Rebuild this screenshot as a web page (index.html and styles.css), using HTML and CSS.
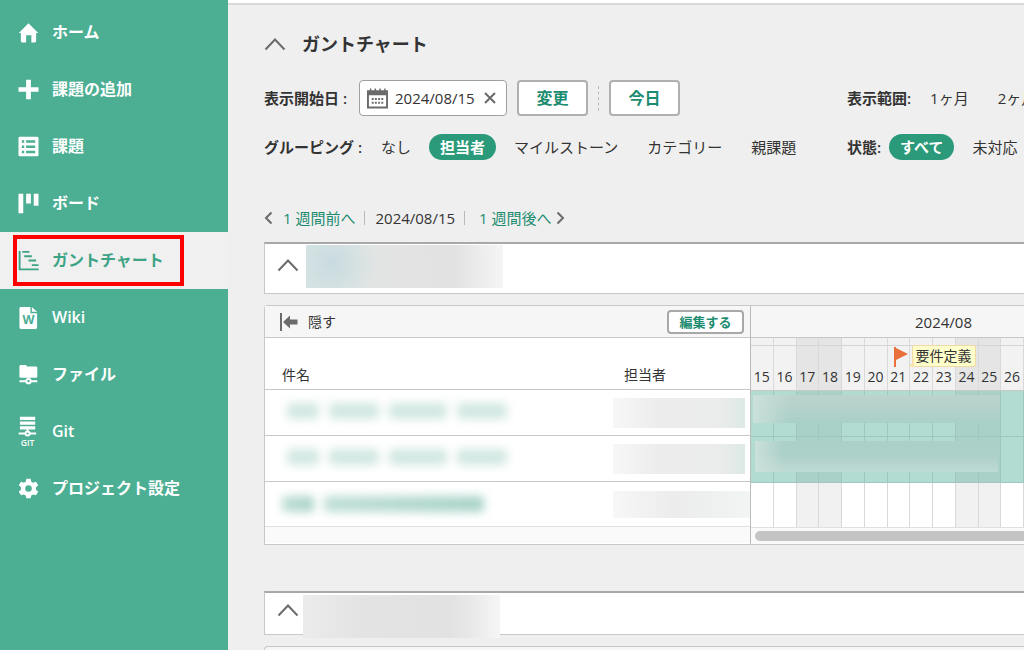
FILE: index.html
```html
<!DOCTYPE html>
<html lang="ja">
<head>
<meta charset="utf-8">
<title>ガントチャート</title>
<link rel="stylesheet" href="styles.css">
</head>
<body>
<div class="app">
  <nav class="sidebar">
    <a class="nav-item" href="#"><svg class="nav-icon" viewBox="0 0 22 22"><path d="M11 1.2 21.2 11.4H19V20q0 1.400-1.400 1.400H14V14H8.500v7.400H4.400Q3 21.400 3 20V11.400H.8Z"/></svg><span>ホーム</span></a>
    <a class="nav-item" href="#"><svg class="nav-icon" viewBox="0 0 22 22"><path d="M8.500.7h5v8h8v4.600h-8v8h-5v-8h-8V8.700h8Z"/></svg><span>課題の追加</span></a>
    <a class="nav-item" href="#"><svg class="nav-icon" viewBox="0 0 22 22"><rect x=".5" y=".7" width="21" height="20.600" rx="1.500"/><path class="cut" d="M4 4.500h2.500V7H4zm4.500 0h9.500V7H8.500zM4 10h2.500v2.500H4zm4.500 0h9.500v2.500H8.500zM4 15.500h2.500V18H4zm4.500 0h9.500V18H8.500z"/></svg><span>課題</span></a>
    <a class="nav-item" href="#"><svg class="nav-icon" viewBox="0 0 22 22"><path d="M.5.700h5v20.600h-5zM8.500.700h5v10.300h-5zM16.500.700h5v12.600h-5z"/></svg><span>ボード</span></a>
    <a class="nav-item active" href="#"><svg class="nav-icon" viewBox="0 0 22 22"><path d="M.7 1h2v18.300h19v2H.7zM4.500 1H12v2H4.500zM6.500 5.500H14.500v2H6.500zM11 10h8v2h-8zM14.500 14.800h7v2h-7z"/></svg><span>ガントチャート</span></a>
    <a class="nav-item" href="#"><svg class="nav-icon tall" viewBox="0 0 22 24"><path d="M3 .5H13V7h7v15q0 1.500-1.500 1.500H3Q1.500 23.500 1.500 22V2Q1.500.500 3 .5ZM14.500.500 20 5.500H14.500Z"/><text class="w" x="11" y="18.500">W</text></svg><span>Wiki</span></a>
    <a class="nav-item" href="#"><svg class="nav-icon" viewBox="0 0 22 22"><path d="M3 1H8q1 0 1.200 1.500H19q1.200 0 1.200 1.200v9.300q0 1.500-1.200 1.500H3q-1.500 0-1.500-1.500V2.500Q1.500 1 3 1ZM1.500 17H20.200v2H1.500z"/><circle cx="11" cy="18" r="3.300"/><path d="M10 14h2v3h-2z"/><circle class="cut" cx="11" cy="18" r="1.200"/></svg><span>ファイル</span></a>
    <a class="nav-item" href="#"><svg class="nav-icon git" viewBox="0 0 22 34"><path d="M2 1h16v3.500H2zM2 6h16v3.500H2zM2 11h16v3.500H2zM9 14h2v3h-2zM.7 17.500H19v2H.7z"/><circle cx="10" cy="18.500" r="3.200"/><circle class="cut" cx="10" cy="18.500" r="1.100"/><text x="10" y="32">GIT</text></svg><span>Git</span></a>
    <a class="nav-item" href="#"><svg class="nav-icon" viewBox="0 0 22 22"><path d="m8.800.800h4.400l.7 3 2 1.100 2.900-1 2.400 3.800-2.300 2.100v2.400l2.300 2.100-2.400 3.800-2.900-.9-2 1.100-.7 3H8.800l-.7-3-2-1.100-2.900.9L.8 14.300l2.300-2.100V9.800L.8 7.700l2.400-3.800 2.900 1 2-1.100Z"/><circle class="cut" cx="11" cy="11" r="3.400"/></svg><span>プロジェクト設定</span></a>
    <div class="highlight"></div>
  </nav>

  <main class="main">
    <div class="topbar"></div>
    <div class="content">
      <h1 class="title"><svg class="chevron" viewBox="0 0 22 14"><path d="M1.500 12.500 11 2.500l9.500 10"/></svg>ガントチャート</h1>

      <div class="filters">
        <div class="filter">
          <label class="filter-label start-label" for="start">表示開始日 :</label>
          <div class="date-box">
            <svg class="calendar" viewBox="0 0 22 21"><path d="M1 3h20v17H1z" class="frame"/><path d="M0 2h22v5H0zM3 0h1.500v3H3zM8 0h1.500v3H8zM13 0h1.500v3H13zM18 0h1.500v3H18z"/><path d="M5 10h2v2H5zm3.300 0h2v2h-2zm3.400 0h2v2h-2zm3.300 0h2v2h-2zM5 14h2v2H5zm3.300 0h2v2h-2zm3.400 0h2v2h-2zm3.300 0h2v2h-2z"/></svg>
            <input class="date-input" id="start" type="text" value="2024/08/15">
            <button class="clear" aria-label="クリア"><svg viewBox="0 0 12 12"><path d="m1 1 10 10M11 1 1 11"/></svg></button>
          </div>
          <button class="btn">変更</button>
          <span class="dots"></span>
          <button class="btn">今日</button>
        </div>
        <div class="filter">
          <span class="filter-label">表示範囲:</span>
          <div class="options"><button class="option">1ヶ月</button><button class="option">2ヶ月</button></div>
        </div>
        <div class="filter">
          <span class="filter-label">グルーピング :</span>
          <div class="options"><button class="option">なし</button><button class="option selected">担当者</button><button class="option">マイルストーン</button><button class="option">カテゴリー</button><button class="option">親課題</button></div>
        </div>
        <div class="filter">
          <span class="filter-label">状態:</span>
          <div class="options"><button class="option selected">すべて</button><button class="option">未対応</button></div>
        </div>
      </div>

      <div class="pager">
        <a class="page-link" href="#"><svg class="arrow" viewBox="0 0 9 14"><path d="M7.500 1.500 2 7l5.500 5.500"/></svg>1 週間前へ</a>
        <span class="page-date">2024/08/15</span>
        <a class="page-link following" href="#">1 週間後へ<svg class="arrow" viewBox="0 0 9 14"><path d="M1.500 1.500 7 7l-5.500 5.500"/></svg></a>
      </div>

      <section class="group">
        <svg class="chevron" viewBox="0 0 22 14"><path d="M1.500 12.500 11 2.500l9.500 10"/></svg>
        <div class="masked-name tinted"></div>
      </section>

      <section class="gantt">
        <div class="issues">
          <div class="toolbar">
            <button class="hide"><svg viewBox="0 0 18 18"><path d="M0 0h2v18H0zM3 9l7-6.500v4h7.500v5H10v4z"/></svg>隠す</button>
            <button class="btn small">編集する</button>
          </div>
          <table class="issue-table">
            <thead><tr><th class="subject">件名</th><th>担当者</th></tr></thead>
            <tbody>
              <tr><td><div class="masked-text"><i class="w30"></i><i class="w45"></i><i class="w55"></i><i class="w45"></i></div></td><td><div class="masked-person"></div></td></tr>
              <tr><td><div class="masked-text"><i class="w30"></i><i class="w45"></i><i class="w55"></i><i class="w45"></i></div></td><td><div class="masked-person"></div></td></tr>
              <tr><td><div class="masked-text strong"><i class="w30"></i><i class="w160"></i></div></td><td><div class="masked-person wide"></div></td></tr>
            </tbody>
          </table>
          <div class="foot"></div>
        </div>
        <div class="timeline">
          <div class="month">2024/08</div>
          <table class="days">
            <thead>
              <tr><th>15</th><th>16</th><th>17</th><th>18</th><th>19</th><th>20</th><th class="marked">21<div class="milestone"><svg class="flag" viewBox="0 0 14 20"><path d="M0 0h2v1l12 6L2 13v7H0z"/></svg><span class="tag"><svg class="tail" viewBox="0 0 6 8"><path d="M6 0v8H0Q4 6 5 0z"/></svg>要件定義</span></div></th><th>22</th><th>23</th><th>24</th><th>25</th><th>26</th></tr>
            </thead>
            <tbody>
              <tr class="busy"><td class="first"><div class="bar"></div></td><td></td><td></td><td></td><td></td><td></td><td></td><td></td><td></td><td></td><td></td><td></td></tr>
              <tr class="busy"><td class="first"><div class="bar lower"></div></td><td></td><td></td><td></td><td></td><td></td><td></td><td></td><td></td><td></td><td></td><td></td></tr>
              <tr><td></td><td></td><td></td><td></td><td></td><td></td><td></td><td></td><td></td><td></td><td></td><td></td></tr>
            </tbody>
          </table>
          <div class="foot"><div class="scroll-thumb"></div></div>
        </div>
      </section>

      <section class="group compact">
        <svg class="chevron" viewBox="0 0 22 14"><path d="M1.500 12.500 11 2.500l9.500 10"/></svg>
        <div class="masked-name"></div>
      </section>
      <section class="gantt next"></section>
    </div>
  </main>
</div>
</body>
</html>
```

FILE: styles.css
```css
* { box-sizing: border-box; }
body {
  margin: 0;
  background: #efefef;
  color: #333;
  font: 15px/20px "Open Sans", "Noto Sans CJK JP", sans-serif;
  overflow: hidden;
}
button, input { font: inherit; color: inherit; padding: 0; border: 0; background: none; }
button { white-space: nowrap; }
svg { display: block; flex: none; }
.app { display: flex; height: 100vh; }

.sidebar {
  position: relative;
  flex: none;
  width: 228px;
  padding-top: 4px;
  background: #4cae93;
}
.nav-item {
  display: flex;
  align-items: center;
  height: 57px;
  padding-left: 18px;
  gap: 13px;
  color: #fff;
  font-size: 16px;
  font-weight: 600;
  text-decoration: none;
}
.nav-item span { padding-bottom: 2px; }
.nav-item.active { background: #f0f0f0; color: #3da385; }
.nav-icon { width: 21px; height: 21px; fill: currentColor; }
.nav-icon.tall { height: 24px; }
.nav-icon.git { height: 34px; }
.nav-icon .cut { fill: #4cae93; }
.nav-icon text { font-size: 9px; font-weight: 600; text-anchor: middle; }
.nav-icon .w { fill: #4cae93; font-size: 13px; font-weight: 700; }
.highlight {
  position: absolute;
  left: 13px;
  top: 235px;
  width: 171px;
  height: 51px;
  border: 4px solid #f00;
}

.main { flex: 1; min-width: 0; overflow: hidden; }
.topbar { height: 5px; background: #fff; border-bottom: 2px solid #d9d9d9; }
.content { padding: 24px 0 0 36px; }
.title {
  display: flex;
  align-items: center;
  gap: 16px;
  margin: 0;
  height: 30px;
  font-size: 18px;
  font-weight: 600;
}
.chevron { width: 22px; height: 14px; fill: none; stroke: #6b6b6b; stroke-width: 2; }

.filters {
  display: grid;
  grid-template-columns: 583px max-content;
  row-gap: 18px;
  padding-top: 21px;
}
.filter { display: flex; align-items: center; }
.filter:nth-child(-n+2) { height: 36px; }
.filter:nth-child(n+3) { height: 26px; }
.filter-label { margin-right: 8px; font-weight: 600; white-space: nowrap; }
.start-label { width: 87px; }
.date-box {
  display: flex;
  align-items: center;
  width: 148px;
  height: 36px;
  padding: 0 10px 0 7px;
  background: #fff;
  border: 1px solid #a0a0a0;
  border-radius: 4px;
}
.calendar { width: 21px; height: 21px; fill: #6b6b6b; }
.calendar .frame { fill: #fff; stroke: #6b6b6b; stroke-width: 2; }
.date-input { flex: 1; min-width: 0; margin-left: 7px; outline: 0; }
.clear svg { width: 12px; height: 12px; stroke: #6b6b6b; stroke-width: 2; }
.btn {
  width: 71px;
  height: 36px;
  margin-left: 10px;
  background: #fff;
  border: 2px solid #b0b0b0;
  border-radius: 4px;
  color: #1c8c70;
  font-size: 16px;
  font-weight: 700;
}
.dots { height: 25px; margin-left: 10px; border-left: 1px dashed #b8b8b8; }
.options { display: flex; gap: 7px; }
.option { height: 26px; padding: 0 11px; border-radius: 13px; }
.option.selected { background: #2a9a7a; color: #fff; font-weight: 700; }

.pager { display: flex; align-items: center; height: 20px; margin-top: 48px; margin-bottom: 14px; }
.page-link { display: flex; align-items: center; gap: 10px; color: #1c8c70; text-decoration: none; }
.page-link.following { gap: 4px; }
.arrow { width: 9px; height: 14px; fill: none; stroke: #6b6b6b; stroke-width: 2; }
.page-date {
  margin: 0 14px 0 9px;
  padding: 0 9px 0 10px;
  line-height: 14px;
  border: solid #bbb;
  border-width: 0 1px;
}

.group {
  display: flex;
  align-items: center;
  height: 52px;
  padding-left: 12px;
  gap: 7px;
  background: #fff;
  border: 1px solid #c8c8c8;
  border-top: 2px solid #a8a8a8;
  border-right: 0;
}
.group .chevron { margin-bottom: 7px; }
.masked-name {
  width: 197px;
  height: 43px;
  background: linear-gradient(90deg, #ebebeb, #e3e3e3 30%, #e2e2e2 75%, #e8e8e8 85%, #f6f6f6);
}
.masked-name.tinted {
  margin-bottom: 5px;
  background:
    radial-gradient(circle at 26px 18px, #c9dbe0, transparent 44px),
    linear-gradient(90deg, #d8e5e4, #e1e5e4 28%, #e3e3e3 45%, #e2e2e2 75%, #f5f5f5);
}
.group.compact { height: 44px; margin-top: 46px; gap: 4px; }
.compact .masked-name { margin-top: 6px; flex: none; }

.gantt {
  display: flex;
  margin-top: 11px;
  background: #fff;
  border: 1px solid #c8c8c8;
  border-right: 0;
  border-radius: 4px 0 0 0;
}
.gantt.next { height: 60px; background: #f6f6f6; }
.issues { flex: none; width: 486px; border-right: 1px solid #bbb; }
.timeline { flex: 1; min-width: 0; }
.toolbar, .month { height: 32px; background: #f6f6f6; border-bottom: 1px solid #c8c8c8; }
.toolbar { display: flex; align-items: center; justify-content: space-between; padding: 0 6px 0 15px; }
.hide { display: flex; align-items: center; gap: 10px; font-size: 14px; }
.hide svg { width: 18px; height: 18px; fill: #6b6b6b; }
.btn.small { width: 77px; height: 24px; margin: 0; font-size: 13px; line-height: 18px; border-color: #a8a8a8; }
.month { padding-left: 112px; text-align: center; line-height: 33px; }

.issue-table, .days { width: 100%; border-collapse: separate; border-spacing: 0; table-layout: fixed; }
th { height: 52px; padding: 0 0 4px; vertical-align: bottom; font-weight: 400; font-size: 14px; line-height: 20px; }
th, td { border-bottom: 1px solid #c8c8c8; }
td { height: 46px; padding: 0; }
tbody tr:last-child td { height: 45px; border-bottom-color: #e0e0e0; }
.issue-table th { text-align: left; }
.issue-table th:last-child { padding-left: 11px; }
.issue-table .subject { width: 348px; padding-left: 17px; }
.masked-text {
  display: flex;
  gap: 10px;
  margin: 0 0 3px 22px;
  filter: blur(5px);
}
.masked-text i { height: 16px; background: #d2e8e2; border-radius: 4px; }
.masked-text.strong { margin: 0 0 0 17px; }
.masked-text.strong i { background: linear-gradient(90deg, #c0dfd6, #a9d3c8); }
.w30 { width: 32px; }
.w45 { width: 50px; }
.w55 { width: 58px; }
.w160 { width: 160px; }
.masked-person {
  width: 132px;
  height: 30px;
  background: linear-gradient(90deg, #f7f7f7, #ececec 35%, #ebecec 80%, #dce9e5);
}
.masked-person.wide { width: 100%; height: 27px; background: linear-gradient(90deg, #f7f7f7, #ececec 45%, #f1f5f4); }

.days th { position: relative; background: #f2f2f2; text-align: center; }
.days th::before {
  content: "";
  display: block;
  height: 7px;
  margin-bottom: 21px;
  border-bottom: 1px solid #d5d5d5;
}
.days th { padding-bottom: 3px; }
.days th, .days td { border-right: 1px solid #d9d9d9; }
.days th:nth-child(3), .days th:nth-child(4), .days th:nth-child(10), .days th:nth-child(11) { background: #e5e5e5; }
.days td:nth-child(3), .days td:nth-child(4), .days td:nth-child(10), .days td:nth-child(11) { background: #f1f1f1; }
.days .busy td { background: #b2dbd2; border-color: #9fc7be; }
.days .busy td:nth-child(3), .days .busy td:nth-child(4), .days .busy td:nth-child(10), .days .busy td:nth-child(11) { background: #a9d1c8; }
.days .first { position: relative; }
.bar {
  position: absolute;
  left: 2px;
  top: 4px;
  width: 247px;
  height: 28px;
  background: linear-gradient(90deg, #cbe0da, transparent 15%), linear-gradient(#bcd3cd, #a9d0c8);
}
.bar.lower {
  left: 4px;
  width: 243px;
  height: 31px;
  background: linear-gradient(90deg, #cbe0da, transparent 12%), linear-gradient(#aad0c8 40%, #bfdad4);
}
.days .marked { z-index: 1; }
.milestone { position: absolute; left: 6px; top: 7px; display: flex; gap: 4px; }
.flag { width: 14px; height: 20px; margin-top: 2px; fill: #e9703a; }
.tag {
  position: relative;
  padding: 0 3px;
  background: #ffffcc;
  border: 1px solid #f1d9a4;
  border-radius: 2px;
  white-space: nowrap;
}
.tail { position: absolute; left: -5px; bottom: -1px; width: 6px; height: 8px; fill: #f6e3b0; }
.foot { height: 16px; padding: 3px 0 0 4px; background: #fafafa; }
.scroll-thumb { height: 10px; background: #c4c4c4; border-radius: 5px 0 0 5px; }
```
